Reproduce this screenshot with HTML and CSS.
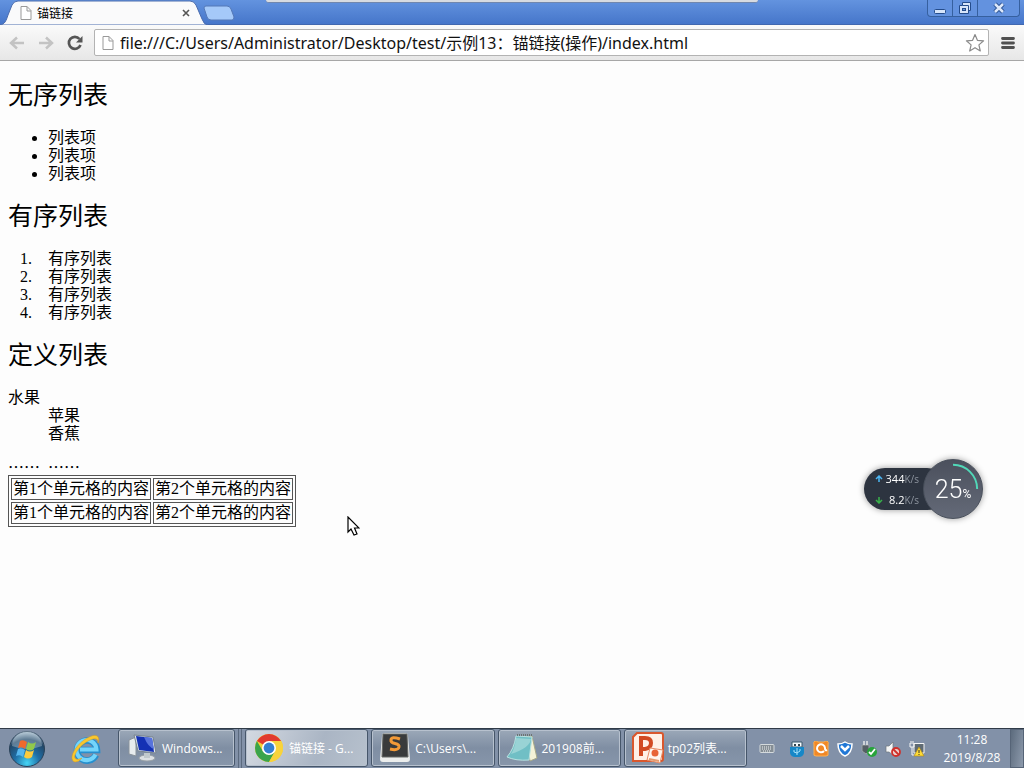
FILE: index.html
```html
<!DOCTYPE html>
<html lang="zh-CN">
<head>
<meta charset="utf-8">
<meta name="viewport" content="width=device-width, initial-scale=1">
<title>锚链接</title>
<link rel="stylesheet" href="styles.css">
</head>
<body>
<header class="titlebar">
  <div class="tab">
    <svg class="tab-shape" viewBox="0 0 208 25" preserveAspectRatio="none" aria-hidden="true"><path d="M0 25C5 24 6 21 8 15L12 5Q14 1 18 1H190Q194 1 196 5L202 19Q204 25 208 25Z" fill="#fafafb" stroke="#4b6cae" stroke-width="1"/></svg>
    <svg class="doc" viewBox="0 0 12 14" aria-hidden="true"><path d="M1 .5H7L11 4.500V13.500H1Z M7 .5V5H11" fill="#fff" stroke="#999"/></svg>
    <span class="tab-title">锚链接</span>
    <button class="tab-close" type="button" aria-label="关闭标签页"><svg viewBox="0 0 8 8" width="8" height="8"><path d="M1 1L7 7M7 1L1 7" stroke="#555" stroke-width="1.600"/></svg></button>
  </div>
  <button class="new-tab" type="button" aria-label="新标签页"><svg viewBox="0 0 32 16" width="32" height="16"><path d="M3 1H24Q27 1 28 4L31 12Q31 15 29 15H8Q5 15 4 12L1 3Q1 1 3 1Z" fill="#a5c9f9" stroke="#5478b7"/></svg></button>
  <div class="top-strip"></div>
  <div class="window-controls">
    <button type="button" aria-label="最小化"><svg viewBox="0 0 14 14" width="14" height="14"><rect x="1.500" y="8.500" width="11" height="4" rx="1" fill="#d7e5fa" stroke="#244c8c"/></svg></button>
    <button type="button" aria-label="还原"><svg viewBox="0 0 14 14" width="14" height="14"><path d="M4.500 1.500H12.500V9.500H10.500V12.500H1.500V4.500H4.500Z" fill="#d7e5fa" stroke="#244c8c"/><path d="M4.500 4.500H10.500V10" fill="none" stroke="#244c8c"/><rect x="4.500" y="7.500" width="3" height="2" fill="#6c98de" stroke="#244c8c"/></svg></button>
    <button class="win-close" type="button" aria-label="关闭"><svg viewBox="0 0 14 14" width="14" height="14"><path d="M3 3L11 11M11 3L3 11" stroke="#244c8c" stroke-width="4.500"/><path d="M3 3L11 11M11 3L3 11" stroke="#dce8fa" stroke-width="2.500"/></svg></button>
  </div>
</header>
<nav class="toolbar">
  <button class="nav-button" type="button" aria-label="后退"><svg viewBox="0 0 16 14" width="16" height="14"><path d="M15 7H2M8 1.500L2 7L8 12.500" fill="none" stroke="#c3c3c3" stroke-width="2.500"/></svg></button>
  <button class="nav-button" type="button" aria-label="前进"><svg viewBox="0 0 16 14" width="16" height="14"><path d="M1 7H14M8 1.500L14 7L8 12.500" fill="none" stroke="#c3c3c3" stroke-width="2.500"/></svg></button>
  <button class="nav-button" type="button" aria-label="重新加载"><svg viewBox="0 0 16 16" width="16" height="16"><path d="M12.500 4A6 6 0 1 0 13.500 10" fill="none" stroke="#555" stroke-width="2.700"/><path d="M15.500 1V7.500H9Z" fill="#555"/></svg></button>
  <div class="address">
    <svg class="doc" viewBox="0 0 12 14" aria-hidden="true"><path d="M1 .5H7L11 4.500V13.500H1Z M7 .5V5H11" fill="#fff" stroke="#999"/></svg>
    <input class="url" type="text" aria-label="地址" value="file:///C:/Users/Administrator/Desktop/test/示例13：锚链接(操作)/index.html">
    <button class="star" type="button" aria-label="收藏"><svg viewBox="0 0 20 20" width="20" height="20"><path d="M10 1.500L12.400 7.300L18.600 7.800L13.900 11.900L15.300 18L10 14.700L4.700 18L6.100 11.900L1.400 7.800L7.600 7.300Z" fill="#fff" stroke="#8a8a8a" stroke-width="1.200" stroke-linejoin="round"/></svg></button>
  </div>
  <button class="menu" type="button" aria-label="菜单"><svg viewBox="0 0 14 14" width="14" height="14"><path d="M1.500 2.500H12.500M1.500 7H12.500M1.500 11.500H12.500" stroke="#505050" stroke-width="2.800" stroke-linecap="round"/></svg></button>
</nav>
<main class="page">
  <h2>无序列表</h2>
  <ul>
    <li>列表项</li>
    <li>列表项</li>
    <li>列表项</li>
  </ul>
  <h2>有序列表</h2>
  <ol>
    <li>有序列表</li>
    <li>有序列表</li>
    <li>有序列表</li>
    <li>有序列表</li>
  </ol>
  <h2>定义列表</h2>
  <dl>
    <dt>水果</dt>
    <dd>苹果</dd>
    <dd>香蕉</dd>
  </dl>
  <div class="dots"><span>……</span><span>……</span></div>
  <table class="cells">
    <tbody>
      <tr><td>第1个单元格的内容</td><td>第2个单元格的内容</td></tr>
      <tr><td>第1个单元格的内容</td><td>第2个单元格的内容</td></tr>
    </tbody>
  </table>
</main>
<footer class="taskbar">
  <button class="start" type="button" aria-label="开始"><svg viewBox="0 0 38 38" width="38" height="38">
    <defs><radialGradient id="orb" cx=".5" cy=".9" r=".9"><stop offset="0" stop-color="#45d5f5"/><stop offset=".4" stop-color="#1f6ea6"/><stop offset=".75" stop-color="#234767"/><stop offset="1" stop-color="#b5c9d8"/></radialGradient></defs>
    <circle cx="19" cy="19" r="17.500" fill="url(#orb)" stroke="#294158"/><path d="M4 16A15 15 0 0 1 34 16Q19 22 4 16Z" fill="#d2e0e8" opacity=".35"/>
    <path d="M12 11Q15 9 19 12L17 19Q14 16 10 18Z" fill="#ee6a2d"/><path d="M20 12Q24 15 28 12L26 19Q22 22 18 19Z" fill="#91c94b"/><path d="M10 19Q13 17 17 20L15 27Q12 24 8 26Z" fill="#55b6ee"/><path d="M18 20Q22 23 26 20L24 27Q20 30 16 27Z" fill="#fccb3d"/></svg></button>
  <button class="ie" type="button" aria-label="Internet Explorer"><svg viewBox="0 0 32 32" width="32" height="32"><path d="M26 22A10 10 0 1 1 27 17H9" fill="none" stroke="#268fce" stroke-width="6.500"/><path d="M25.500 21.500A10 10 0 1 1 26.500 16.500H10" fill="none" stroke="#74d5fb" stroke-width="4"/><path d="M5 29C-2 27 4 14 14 7S31 1 28 10C29 4 22 5 15 10S2 24 6 26Q8 27 12 25Q9 29 5 29Z" fill="#f9c72d" stroke="#d69a22" stroke-width=".5"/></svg></button>
  <div class="tasks">
    <button class="task task-first" type="button"><svg viewBox="0 0 32 32" width="32" height="32"><path d="M3 8L10 5V24L3 22Z" fill="#e8ecee" stroke="#89929a"/><path d="M8 3L27 5L30 21L12 19Z" fill="#dce4e9" stroke="#77838f"/><path d="M10 4L26 6L28 20L13 18Z" fill="#1431b4"/><path d="M18 5L26 6L28 17Q22 15 18 5Z" fill="#5873dc"/><ellipse cx="21" cy="26" rx="8" ry="3" fill="#dce0e3" stroke="#99a1a7"/><path d="M18 21H24V26H18Z" fill="#c1c9cd"/></svg><span>Windows...</span></button>
    <div class="divider"></div>
    <button class="task task-active" type="button"><svg viewBox="0 0 32 32" width="32" height="32"><circle cx="16" cy="16" r="14" fill="#f5ce35"/><path d="M16 16L3.900 9A14 14 0 0 1 28.100 9H16Z" fill="#e13a2f"/><path d="M3.900 9A14 14 0 0 0 16 30L22 19.500L16 16L10 19.500Z" fill="#3aa44c"/><path d="M16 9H28.100A14 14 0 0 1 16 30L22 19.500Z" fill="#f8d33b"/><circle cx="16" cy="16" r="7" fill="#fff"/><circle cx="16" cy="16" r="5.400" fill="#347fd2"/></svg><span>锚链接 - G...</span></button>
    <button class="task" type="button"><svg viewBox="0 0 32 32" width="32" height="32"><path d="M3 4Q3 1 6 1H26Q29 1 29 4L31 27Q31 30 28 30H4Q1 30 1 27Z" fill="#eceeed"/><path d="M4 2H28L29 25H3Z" fill="#393b3c" stroke="#656866"/><path d="M21 7Q12 4 12 8C11 13 21 10 20 15Q19 19 11 17" fill="none" stroke="#f39a37" stroke-width="3"/></svg><span>C:\Users\...</span></button>
    <button class="task" type="button"><svg viewBox="0 0 32 32" width="32" height="32"><path d="M26 4L31 26L24 29L20 5Z" fill="#f4f2d7" stroke="#a7a989"/><path d="M10 4L26 5L23 28Q10 29 1 25Q8 17 10 4Z" fill="#70bfc5" stroke="#b9e2e1"/><path d="M10 6L25 7Q24 16 5 22Q9 16 10 6Z" fill="#b4e1df" opacity=".6"/><path d="M11 3H27" stroke="#6c7371" stroke-width="2" stroke-dasharray="1 1"/></svg><span>201908前...</span></button>
    <button class="task" type="button"><svg viewBox="0 0 32 32" width="32" height="32"><path d="M5 1H29Q31 1 31 3V27Q31 29 29 29H1V5Z" fill="#fff0e6" stroke="#d9572d" stroke-width="2"/><path d="M9 24V6H13Q19 6 19 11T13 17H9" fill="none" stroke="#d24a22" stroke-width="4"/><path d="M18 16L31 18L28 31L15 28Z" fill="#fff6ef" stroke="#e68962"/><circle cx="23" cy="21" r="3.500" fill="#e86537"/><path d="M17 27L27 29" stroke="#e59a6e" stroke-width="2"/></svg><span>tp02列表...</span></button>
  </div>
  <div class="tray">
    <svg class="keyboard" viewBox="0 0 16 16" width="16" height="16"><rect x="1" y="3.500" width="14" height="8" rx="1" fill="#858e95" stroke="#d4dadd"/><path d="M3 6H13M3 8H13M4 10H12" stroke="#eef1f2" stroke-dasharray="1 1"/></svg>
    <svg viewBox="0 0 16 16" width="16" height="16"><path d="M3 1H13V6H3Z" fill="#f5fafc" stroke="#3d596d"/><path d="M5 3H7V5H5ZM9 3H11V5H9Z" fill="#344650"/><path d="M1 6H15V12Q14 16 10 16H6Q2 16 1 12Z" fill="#1687c7"/><path d="M8 7V14M5 9V11L8 12L11 10V8" fill="none" stroke="#a7e2fa"/></svg>
    <svg viewBox="0 0 16 16" width="16" height="16"><path d="M2 0Q4 0 5 1H11Q12 0 14 0Q16 1 15 4V12Q16 15 13 15H3Q0 15 1 12V4Q0 1 2 0Z" fill="#f18826" stroke="#ffb04e"/><path d="M11 10A4 4 0 1 1 12 7Q12 10 14 9" fill="none" stroke="#fff" stroke-width="2"/></svg>
    <svg viewBox="0 0 16 16" width="16" height="16"><path d="M8 1Q11 3 15 3Q15 12 8 15Q1 12 1 3Q5 3 8 1Z" fill="#2178d6" stroke="#fff" stroke-width="1.500"/><path d="M4 5L8 9L12 5" fill="none" stroke="#fff" stroke-width="2.500"/></svg>
    <svg viewBox="0 0 16 16" width="16" height="16"><path d="M1 4H8V10L5 13L1 10Z" fill="#555f65" stroke="#9ba2a6"/><path d="M3 0V4M6 0V4" stroke="#e5e7e8" stroke-width="1.500"/><circle cx="11" cy="11" r="5" fill="#27a43b"/><path d="M8 11L10 13L14 8" fill="none" stroke="#fff" stroke-width="1.800"/></svg>
    <svg viewBox="0 0 16 16" width="16" height="16"><path d="M1 5H4L8 1V14L4 11H1Z" fill="#f4f5f5" stroke="#6f777d" stroke-width=".7"/><circle cx="11" cy="11" r="4" fill="#ecd3d0" stroke="#cf302b" stroke-width="1.800"/><path d="M8 8L14 14" stroke="#cf302b" stroke-width="1.800"/></svg>
    <svg viewBox="0 0 16 16" width="16" height="16"><path d="M5 2.500H15V12H5Z" fill="#5f6b74" stroke="#f6f6f6"/><path d="M1 2V6H5V2M3 6V14H7M2 0V3M4 0V3" fill="none" stroke="#f6f6f6"/><path d="M10 6L15 15H5Z" fill="#ffdc35" stroke="#b18d1c" stroke-width=".7"/><path d="M10 9V12M10 13V14" stroke="#333"/></svg>
  </div>
  <time class="clock" datetime="2019-08-28T11:28"><span>11:28</span><span>2019/8/28</span></time>
  <button class="show-desktop" type="button" aria-label="显示桌面"></button>
</footer>
<aside class="monitor" aria-label="网速与内存">
  <div class="speeds">
    <div class="speed"><svg viewBox="0 0 8 8" width="8" height="8"><path d="M4 7V2M1 4L4 1L7 4" fill="none" stroke="#4bb6f2" stroke-width="1.500"/></svg><span>344<small>K/s</small></span></div>
    <div class="speed"><svg viewBox="0 0 8 8" width="8" height="8"><path d="M4 1V6M1 4L4 7L7 4" fill="none" stroke="#38b24a" stroke-width="1.500"/></svg><span>8.2<small>K/s</small></span></div>
  </div>
  <div class="gauge"><svg viewBox="0 0 60 60" aria-hidden="true"><path d="M30 5A25 25 0 0 1 55 30" fill="none" stroke="#51d8b8" stroke-width="2"/></svg><span>25<small>%</small></span></div>
</aside>
<svg class="pointer" viewBox="0 0 13 20" width="13" height="20" aria-hidden="true"><path d="M1 1V16L4 13L7 19L10 18L7.500 12H12Z" fill="#fff" stroke="#000" stroke-width="1.200"/></svg>
</body>
</html>
```
FILE: styles.css
```css
* { box-sizing: border-box; }
body {
  margin: 0;
  min-height: 100vh;
  display: flex;
  flex-direction: column;
  position: relative;
  background: #fdfdfd;
  color: #000;
  font-family: "Open Sans", "Noto Sans CJK SC", sans-serif;
  font-size: 12px;
}
button { border: 0; padding: 0; margin: 0; background: none; font: inherit; color: inherit; display: flex; align-items: center; justify-content: center; }
svg { display: block; flex: none; }

.titlebar { height: 25px; display: flex; background: linear-gradient(#6393df, #4676ca); border-bottom: 1px solid #4168b0; position: relative; }
.tab { width: 208px; height: 25px; display: flex; align-items: center; padding: 0 17px 0 20px; position: relative; z-index: 1; }
.tab-shape { position: absolute; inset: 0; width: 100%; height: 100%; }
.doc { width: 12px; height: 14px; position: relative; }
.tab-title { margin-left: 5px; flex: 1; position: relative; }
.tab-close { width: 10px; height: 12px; position: relative; }
.new-tab { height: 26px; margin-left: -5px; }
.top-strip { position: absolute; top: 0; left: 26%; right: 26%; height: 3px; background: #d7dbe1; border-bottom: 1px solid #7187ae; border-radius: 0 0 3px 3px; }
.window-controls { margin-left: auto; margin-right: 4px; height: 17px; display: flex; border: 1px solid #36609f; border-top: 0; border-radius: 0 0 4px 4px; background: #6392df; }
.window-controls button { width: 25px; border-right: 1px solid #36609f; }
.window-controls .win-close { width: 41px; border: 0; }

.toolbar { height: 36px; display: flex; align-items: center; padding: 0 9px 0 7px; background: linear-gradient(#fafafa, #e7e7e7); border-bottom: 1px solid #a7a7a7; }
.nav-button { width: 19px; height: 26px; margin-right: 10px; }
.address { flex: 1; height: 27px; margin-right: 12px; padding: 0 3px 0 7px; display: flex; align-items: center; background: #fff; border: 1px solid #b3b3b3; border-radius: 2px; }
.url { flex: 1; min-width: 0; height: 24px; margin-left: 6px; padding: 0 0 2px; border: 0; outline: 0; background: transparent; color: #111; font: 16px "Noto Sans", "Noto Sans CJK TC", sans-serif; }

.page { flex: 1; padding: 21px 8px; font: 400 16px/18px "Liberation Serif", "Noto Sans CJK SC", serif; }
.page h2 { margin: 0 0 19px; font-size: 25px; line-height: 28px; font-weight: 400; }
.page ul, .page ol { margin: 0 0 20px; padding-left: 40px; }
.page ol li::marker { content: counter(list-item) ".\2003"; }
.page dl { margin: 0 0 14px; }
.page dd { margin: 0 0 0 40px; }
.dots { display: flex; gap: 8px; font-family: "Noto Sans CJK SC", sans-serif; }
.cells { border: 1px solid #555; border-spacing: 2px; }
.cells td { border: 1px solid #555; padding: 1px; line-height: 18px; }

.taskbar { height: 40px; display: flex; align-items: stretch; background: #8291a8; border-top: 1px solid #303b48; color: #fff; }
.start { width: 54px; }
.ie { width: 64px; }
.tasks { flex: 1; min-width: 0; display: flex; gap: 3px; }
.task { flex: 1; min-width: 0; margin: 0 0 1px; padding-left: 7px; gap: 4px; justify-content: flex-start; border: 1px solid #46566a; border-radius: 3px; box-shadow: inset 0 0 0 1px #b7c1ce; background: linear-gradient(#9ba8b8, #7f8ea3 50%, #8796aa); white-space: nowrap; overflow: hidden; }
.task-first { flex: 0 1 117px; }
.divider { width: 4px; border: 1px solid #5b6a7e; border-width: 0 1px; }
.task-active { background: linear-gradient(110deg, #d4dae2, #aab5c4 60%, #b7c1cd); }
.tray { display: flex; align-items: center; gap: 8px; padding: 0 16px 0 12px; }
.keyboard { margin-right: 6px; }
.clock { width: 62px; display: flex; flex-direction: column; align-items: center; justify-content: center; line-height: 18px; margin-right: 7px; }
.show-desktop { width: 14px; border: 1px solid #566477; background: linear-gradient(100deg, #5c6b7d, #8d9aac); }

.monitor { position: absolute; right: 41px; top: 459px; display: flex; align-items: center; filter: drop-shadow(0 0 3px #999); }
.speeds { width: 84px; height: 42px; padding: 0 29px 0 11px; border-radius: 21px; background: #2d3440; color: #fff; font-size: 11px; }
.speed { height: 21px; display: flex; align-items: center; justify-content: space-between; white-space: nowrap; }
.speed small { color: #8d949e; font-size: 10px; }
.gauge { width: 60px; height: 60px; margin-left: -25px; position: relative; display: flex; align-items: center; justify-content: center; border: 1px solid #49505c; border-radius: 50%; background: linear-gradient(#4b505d, #646a78); color: #fff; font: 300 25px Roboto, sans-serif; }
.gauge svg { position: absolute; inset: 0; }
.gauge small { font-size: 12px; font-weight: 400; }
.pointer { position: absolute; left: 347px; top: 516px; }
```
